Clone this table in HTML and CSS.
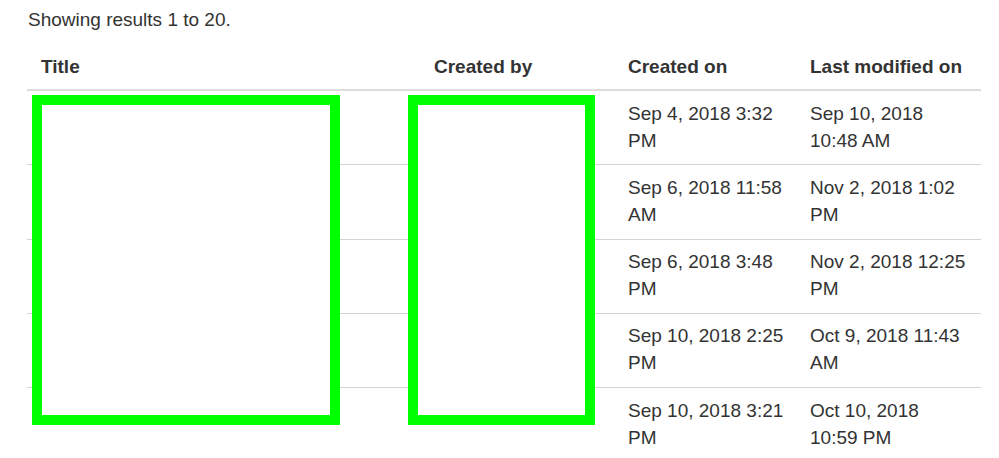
FILE: index.html
```html
<!DOCTYPE html>
<html>
<head>
<meta charset="utf-8">
<link rel="stylesheet" href="styles.css">
</head>
<body>
<p class="summary">Showing results 1 to 20.</p>
<div class="results">
  <table class="results-table">
    <colgroup>
      <col class="c-title">
      <col class="c-by">
      <col class="c-on">
      <col class="c-mod">
    </colgroup>
    <thead>
      <tr><th>Title</th><th>Created by</th><th>Created on</th><th>Last modified on</th></tr>
    </thead>
    <tbody>
      <tr><td></td><td></td><td class="date-on">Sep 4, 2018 3:32 PM</td><td>Sep 10, 2018 10:48 AM</td></tr>
      <tr><td></td><td></td><td class="date-on">Sep 6, 2018 11:58 AM</td><td>Nov 2, 2018 1:02 PM</td></tr>
      <tr><td></td><td></td><td class="date-on">Sep 6, 2018 3:48 PM</td><td>Nov 2, 2018 12:25 PM</td></tr>
      <tr><td></td><td></td><td class="date-on">Sep 10, 2018 2:25 PM</td><td>Oct 9, 2018 11:43 AM</td></tr>
      <tr><td></td><td></td><td class="date-on">Sep 10, 2018 3:21 PM</td><td>Oct 10, 2018 10:59 PM</td></tr>
    </tbody>
  </table>
  <div class="redact redact-title"></div>
  <div class="redact redact-by"></div>
</div>
</body>
</html>
```
FILE: styles.css
```css
html, body {
  margin: 0;
  padding: 0;
  background: #fff;
}
body {
  font-family: "Liberation Sans", Arial, sans-serif;
  font-size: 19px;
  line-height: 27px;
  color: #333;
  padding: 5.6px 0 0 27px;
}
.summary {
  margin: 0 0 10.4px 1px;
}
.results {
  position: relative;
  width: 954px;
}
.results-table {
  width: 954px;
  border-collapse: collapse;
  table-layout: fixed;
}
.c-title { width: 393px; }
.c-by { width: 194px; }
.c-on { width: 182px; }
.c-mod { width: 185px; }
.results-table th,
.results-table td {
  text-align: left;
  vertical-align: top;
  padding: 9.6px 14px;
}
.results-table th {
  font-weight: bold;
  border-bottom: 2px solid #dcdcdc;
}
.results-table td {
  padding-top: 8.6px;
  padding-bottom: 10.6px;
  border-top: 1.4px solid #d4d4d4;
  height: 54px;
}
.results-table td.date-on {
  padding-right: 4px;
}
.results-table tbody tr:first-child td {
  border-top: none;
}
.redact {
  position: absolute;
  top: 52px;
  height: 330px;
  box-sizing: border-box;
  border: 10px solid #00ff00;
  background: #fff;
}
.redact-title {
  left: 5px;
  width: 308px;
}
.redact-by {
  left: 381px;
  width: 187px;
}
```
